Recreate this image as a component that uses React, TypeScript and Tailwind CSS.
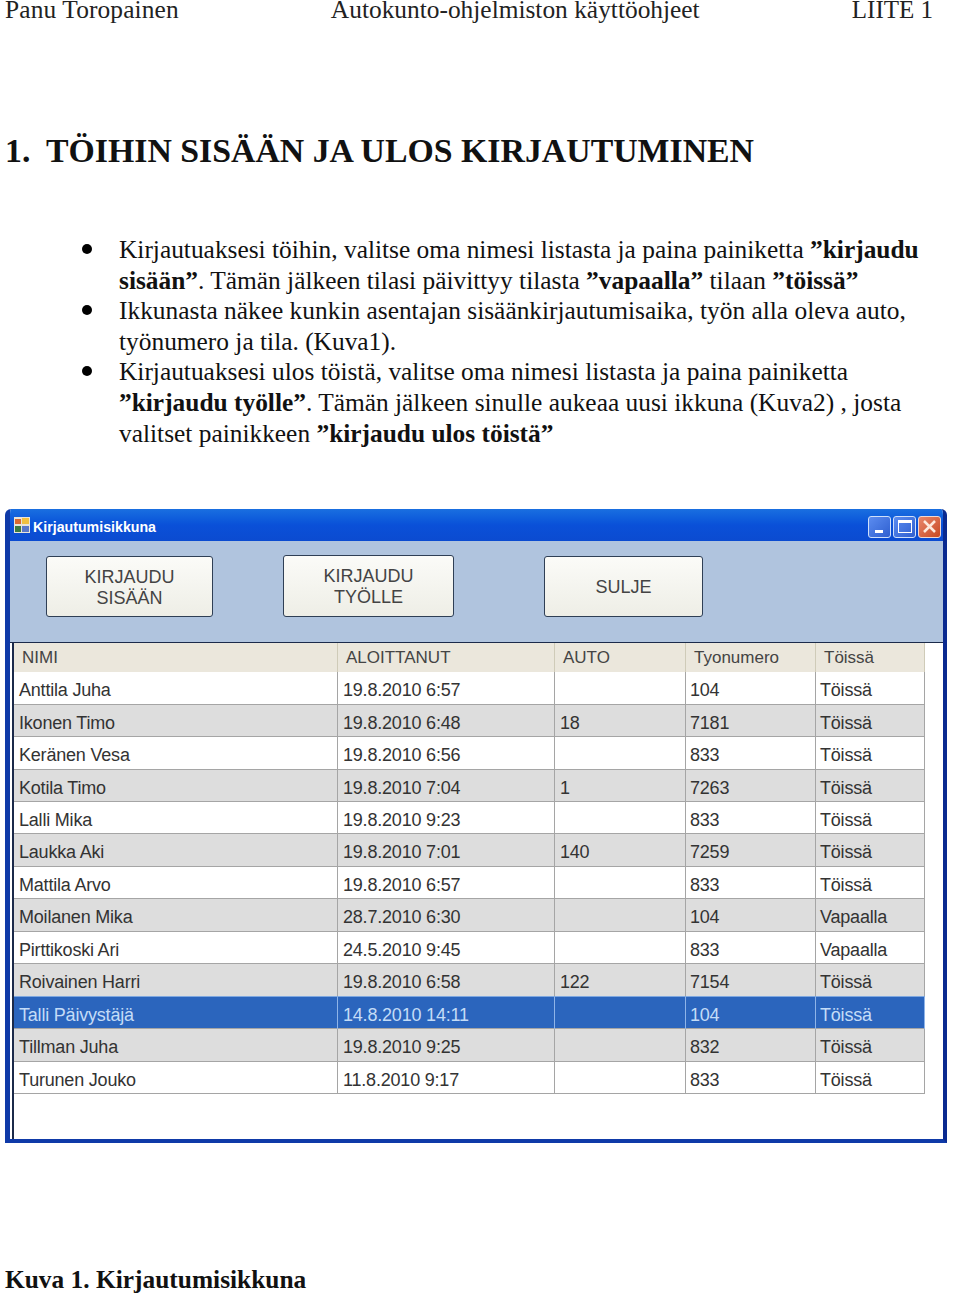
const rows = [
  ["Anttila Juha", "19.8.2010 6:57", "", "104", "Töissä"],
  ["Ikonen Timo", "19.8.2010 6:48", "18", "7181", "Töissä"],
  ["Keränen Vesa", "19.8.2010 6:56", "", "833", "Töissä"],
  ["Kotila Timo", "19.8.2010 7:04", "1", "7263", "Töissä"],
  ["Lalli Mika", "19.8.2010 9:23", "", "833", "Töissä"],
  ["Laukka Aki", "19.8.2010 7:01", "140", "7259", "Töissä"],
  ["Mattila Arvo", "19.8.2010 6:57", "", "833", "Töissä"],
  ["Moilanen Mika", "28.7.2010 6:30", "", "104", "Vapaalla"],
  ["Pirttikoski Ari", "24.5.2010 9:45", "", "833", "Vapaalla"],
  ["Roivainen Harri", "19.8.2010 6:58", "122", "7154", "Töissä"],
  ["Talli Päivystäjä", "14.8.2010 14:11", "", "104", "Töissä"],
  ["Tillman Juha", "19.8.2010 9:25", "", "832", "Töissä"],
  ["Turunen Jouko", "11.8.2010 9:17", "", "833", "Töissä"],
];

const SELECTED_ROW = 10;
const headers = ["NIMI", "ALOITTANUT", "AUTO", "Tyonumero", "Töissä"];
const gridCols = "grid w-[911px] grid-cols-[324px_217px_131px_130px_109px]";

function WinButton({ label, className }: { label: string[]; className: string }) {
  return (
    <button
      className={`flex flex-col items-center justify-center rounded-[3px] border border-[#2f3f55] bg-gradient-to-b from-[#fbfbf8] to-[#eeeee6] pt-[2px] text-[18px] leading-[21px] text-[#444] ${className}`}
    >
      {label.map((line) => (
        <span key={line}>{line}</span>
      ))}
    </button>
  );
}

function Row({ row, index }: { row: string[]; index: number }) {
  const selected = index === SELECTED_ROW;
  const bg = selected ? "bg-[#2b65bd]" : index % 2 === 1 ? "bg-[#dddddd]" : "bg-white";
  const edge = index === SELECTED_ROW - 1 ? "border-[#7fa8e0]" : "border-[#a5a5a5]";
  return (
    <div className={`${gridCols} h-[32.46px] border-b ${edge} ${bg}`}>
      {row.map((cell, i) => (
        <div
          key={i}
          className={`flex items-center border-r pt-[5px] text-[18px] tracking-[-0.2px] ${i < 3 ? "pl-[5px]" : "pl-[4px]"} ${
            selected ? "border-[#8fb4e8] text-[#c4dcf7]" : "border-[#a5a5a5] text-[#333]"
          }`}
        >
          {cell}
        </div>
      ))}
    </div>
  );
}

function Bullet() {
  return (
    <span className="w-[38px] shrink-0 pt-[10px] pl-[1px]">
      <span className="block h-[10px] w-[10px] rounded-full bg-black" />
    </span>
  );
}

export default function App() {
  return (
    <div className="h-[1296px] w-[960px] overflow-hidden bg-white font-['Liberation_Serif',serif] text-black">
      <div className="flex h-[23px] items-end justify-between pr-[27px] pl-[5px] text-[25.4px] leading-[27px] whitespace-nowrap text-[#222]">
        <span className="tracking-[0.12px]">Panu Toropainen</span>
        <span>Autokunto-ohjelmiston käyttöohjeet</span>
        <span className="text-[25px]">LIITE 1</span>
      </div>

      <h1 className="mt-[108px] flex pl-[5px] text-[33.8px] leading-[40px] font-bold text-[#111]">
        <span className="w-[41px]">1.</span>
        <span>TÖIHIN SISÄÄN JA ULOS KIRJAUTUMINEN</span>
      </h1>

      <ul className="mt-[63px] pl-[81px] text-[25.4px] leading-[30.6px] whitespace-nowrap text-[#111]">
        <li className="flex">
          <Bullet />
          <div>
            Kirjautuaksesi töihin, valitse oma nimesi listasta ja paina painiketta <b>”kirjaudu</b>
            <br />
            <b>sisään”</b>. Tämän jälkeen tilasi päivittyy tilasta <b>”vapaalla”</b> tilaan <b>”töissä”</b>
          </div>
        </li>
        <li className="flex">
          <Bullet />
          <div>
            Ikkunasta näkee kunkin asentajan sisäänkirjautumisaika, työn alla oleva auto,
            <br />
            työnumero ja tila. (Kuva1).
          </div>
        </li>
        <li className="flex">
          <Bullet />
          <div>
            Kirjautuaksesi ulos töistä, valitse oma nimesi listasta ja paina painiketta
            <br />
            <b>”kirjaudu työlle”</b>. Tämän jälkeen sinulle aukeaa uusi ikkuna (Kuva2) , josta
            <br />
            valitset painikkeen <b>”kirjaudu ulos töistä”</b>
          </div>
        </li>
      </ul>

      <div className="mt-[61px] ml-[5px] flex h-[634px] w-[942px] flex-col overflow-hidden rounded-t-[6px] border-t-0 border-r-[4px] border-b-[4px] border-l-[5px] border-[#0f3aa8] border-r-[#0a2a90] font-['Liberation_Sans',sans-serif]">
        <div className="-mr-[4px] -ml-[5px] flex h-[32px] shrink-0 items-center bg-gradient-to-b from-[#1a6fe0] via-[#0a50d8] to-[#0b4bd0] pr-[6px] pl-[8px]">
          <svg width="18" height="18" viewBox="0 0 18 18">
            <rect x="1" y="1" width="16" height="16" fill="#e8e4d8" />
            <rect x="2" y="3" width="6" height="5" fill="#d86a30" />
            <rect x="9" y="2" width="7" height="6" fill="#f0c040" />
            <rect x="2" y="10" width="6" height="6" fill="#3a7a40" />
            <rect x="9" y="10" width="7" height="6" fill="#5a78c8" />
          </svg>
          <span className="ml-[2px] pt-[5px] text-[14.2px] font-bold text-white">Kirjautumisikkuna</span>
          <div className="ml-auto flex gap-[2px] pt-[3px]">
            <div className="flex h-[22px] w-[23px] items-end rounded-[3px] border border-[#cfe0fa] bg-gradient-to-br from-[#5b8cf0] to-[#2f5fd0] pb-[4px] pl-[6px]">
              <div className="h-[3px] w-[8px] bg-white" />
            </div>
            <div className="flex h-[22px] w-[23px] items-center justify-center rounded-[3px] border border-[#cfe0fa] bg-gradient-to-br from-[#5b8cf0] to-[#2f5fd0]">
              <div className="h-[13px] w-[14px] border border-t-[3px] border-white" />
            </div>
            <div className="flex h-[22px] w-[23px] items-center justify-center rounded-[3px] border border-[#f0d8d0] bg-gradient-to-br from-[#e8866a] to-[#c8481f]">
              <svg width="15" height="15" viewBox="0 0 15 15">
                <path d="M2 2 L13 13 M13 2 L2 13" stroke="#fde8dc" strokeWidth="2.5" />
              </svg>
            </div>
          </div>
        </div>

        <div className="flex h-[101px] shrink-0 items-start bg-[#b0c4de] pt-[15px] pl-[36px]">
          <WinButton label={["KIRJAUDU", "SISÄÄN"]} className="h-[61px] w-[167px]" />
          <WinButton label={["KIRJAUDU", "TYÖLLE"]} className="-mt-px ml-[70px] h-[62px] w-[171px]" />
          <WinButton label={["SULJE"]} className="ml-[90px] h-[61px] w-[159px]" />
        </div>

        <div className="flex-1 border-t border-[#1b2a4a] bg-white pl-[2px]">
          <div className="h-full border-l-2 border-[#1b2a4a]">
            <div className={`${gridCols} h-[29px] bg-[#ebe7dc] text-[17px] text-[#444]`}>
              {headers.map((h) => (
                <div key={h} className="flex items-center border-r border-[#cfcbb8] pt-[1px] pl-[8px]">
                  {h}
                </div>
              ))}
            </div>
            {rows.map((row, i) => (
              <Row key={row[0]} row={row} index={i} />
            ))}
          </div>
        </div>
      </div>

      <div className="mt-[122px] pl-[5px] text-[25.4px] leading-[28px] font-bold text-[#111]">
        Kuva 1. Kirjautumisikkuna
      </div>
    </div>
  );
}
